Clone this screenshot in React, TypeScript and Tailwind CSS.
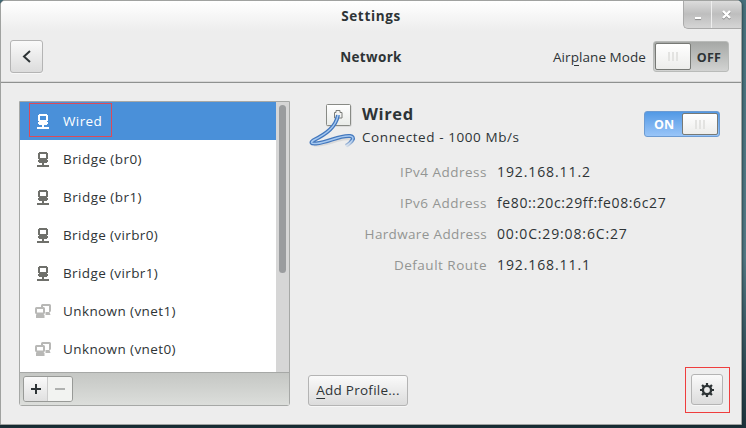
import React from "react";

type NetworkDevice = { name: string; kind: "wired" | "virtual"; tracking: string };

const devices: NetworkDevice[] = [
  { name: "Wired", kind: "wired", tracking: "tracking-[0.4px]" },
  { name: "Bridge (br0)", kind: "wired", tracking: "tracking-[0.43px]" },
  { name: "Bridge (br1)", kind: "wired", tracking: "tracking-[0.43px]" },
  { name: "Bridge (virbr0)", kind: "wired", tracking: "tracking-[0.38px]" },
  { name: "Bridge (virbr1)", kind: "wired", tracking: "tracking-[0.38px]" },
  { name: "Unknown (vnet1)", kind: "virtual", tracking: "tracking-[0.4px]" },
  { name: "Unknown (vnet0)", kind: "virtual", tracking: "tracking-[0.4px]" },
];

const details = [
  { label: "IPv4 Address", value: "192.168.11.2", labelTracking: "tracking-[0.5px]", tracking: "tracking-[0.9px]" },
  { label: "IPv6 Address", value: "fe80::20c:29ff:fe08:6c27", labelTracking: "tracking-[0.5px]", tracking: "tracking-[0.62px]" },
  { label: "Hardware Address", value: "00:0C:29:08:6C:27", labelTracking: "tracking-[0.35px]", tracking: "tracking-[0.86px]" },
  { label: "Default Route", value: "192.168.11.1", labelTracking: "tracking-[0.5px]", tracking: "tracking-[0.9px]" },
];

const raised =
  "border border-[#b4b4b4] bg-gradient-to-b from-[#fafafa] to-[#dcdcdc] shadow-[0_1px_0_#f7f7f7]";

function WiredIcon() {
  return (
    <svg width="12" height="15" viewBox="0 0 12 15" fill="currentColor" shapeRendering="crispEdges">
      <path fillRule="evenodd" d="M2 0h8v1h1v6h-1v1h1v2h-1v1H7v2h5v2H0v-2h5v-2H2v-1H1V8h1V7H1V1h1zM3 2v4h6V2z" />
    </svg>
  );
}

function VirtualIcon() {
  return (
    <svg width="16" height="14" viewBox="0 0 16 14" fill="currentColor">
      <path d="M6 3V1.500Q6 0 7.500 0H14.500Q16 0 16 1.500V6.500Q16 8 14.500 8L15.500 11H10.500V8H14V2H8V3z" />
      <path fillRule="evenodd" d="M1.500 3H8.500Q10 3 10 4.500V8.500Q10 10 8.500 10L9.500 11V14H1V11L1.500 10Q0 10 0 8.500V4.500Q0 3 1.500 3zM2 5V8.500H8V5z" />
    </svg>
  );
}

function CableIcon() {
  const cable = "M30 12C28 24 18 31 6 37C2 39.500 3 41 8 40.500C21 39.500 31 32 42 33C48 34 44 39 38 43";
  return (
    <svg width="48" height="46" viewBox="0 0 48 46" fill="none" className="mt-[2px]">
      <defs>
        <linearGradient id="plate" x1="0" y1="0" x2="0" y2="1">
          <stop stopColor="#fff" />
          <stop offset="1" stopColor="#e9ebe8" />
        </linearGradient>
        <linearGradient id="end" x1="0" y1="36" x2="0" y2="45" gradientUnits="userSpaceOnUse">
          <stop stopColor="#ededed" stopOpacity="0" />
          <stop offset="1" stopColor="#ededed" />
        </linearGradient>
      </defs>
      <rect x="18.500" y="2" width="25" height="21.500" rx="1.500" fill="#c9c9c9" />
      <rect x="18.500" y="1.500" width="24" height="21" rx="1" fill="url(#plate)" stroke="#888a85" />
      <path d="M26.500 15V9.500h1.500V7.500h4v2h2V15z" fill="#f4f4f2" stroke="#7b7d79" />
      <path d="M6 42C20 43 31 34 43 36" stroke="#bebebe" strokeWidth="3" opacity=".4" />
      <path d={cable} stroke="#4478bd" strokeWidth="4" strokeLinejoin="round" />
      <path d={cable} stroke="#a5c8f0" strokeWidth="1.500" />
      <path d="M34 37h14v9H34z" fill="url(#end)" />
    </svg>
  );
}

function GearIcon() {
  return (
    <svg width="14" height="14" viewBox="0 0 14 14" fill="none" stroke="#2e3436">
      <circle cx="7" cy="7" r="4.100" strokeWidth="2.400" />
      <path d="M7 0v3M7 11v3M0 7h3M11 7h3M2.050 2.050l2.100 2.100M9.850 9.850l2.100 2.100M11.950 2.050l-2.100 2.100M4.150 9.850l-2.100 2.100" strokeWidth="2.200" />
    </svg>
  );
}

function Grip() {
  return (
    <div className="flex gap-[2px]">
      {[0, 1, 2].map((i) => (
        <span key={i} className="h-[9px] w-[2px] bg-[#e3e3e1]" />
      ))}
    </div>
  );
}

function Knob() {
  return (
    <div className="flex w-9 items-center justify-center rounded-[2px] border border-[#777975] bg-gradient-to-b from-white to-[#ededeb]">
      <Grip />
    </div>
  );
}

function DeviceRow({ device, selected }: { device: NetworkDevice; selected: boolean }) {
  const iconColor = selected ? "text-white" : device.kind === "wired" ? "text-[#6f706b]" : "text-[#b8b8b6]";
  return (
    <div
      className={
        selected
          ? "flex h-[38px] shrink-0 items-center bg-[#4a90d9] pl-[9px] text-white"
          : "flex h-[38px] shrink-0 items-center pl-[9px]"
      }
    >
      <div
        className={
          selected
            ? "mb-[2px] flex h-[34px] w-[83px] items-center border border-[#dc4a58] pt-[2px]"
            : "flex h-[34px] items-center pl-px"
        }
      >
        <span className={"flex w-[27px] justify-center pr-px " + iconColor}>
          {device.kind === "wired" ? <WiredIcon /> : <VirtualIcon />}
        </span>
        <span className={"ml-[6px] whitespace-nowrap " + device.tracking}>{device.name}</span>
      </div>
    </div>
  );
}

export default function App() {
  return (
    <div className="h-[428px] w-[746px] overflow-hidden bg-gradient-to-b from-[#47707c] via-[#527884] via-60% to-[#1d323b] font-['Open_Sans',sans-serif] text-[13.5px] leading-5 text-[#2e3436]">
      <div className="flex h-[425px] w-[742px] flex-col overflow-hidden rounded-t-[5px] border border-[#a0a2a0] bg-[#ededed] shadow-[0_1px_3px_#10242a]">
        <header className="relative flex h-[30px] shrink-0 items-center justify-center bg-gradient-to-b from-white to-[#ededed] font-bold">
          <span className="tracking-[0.65px]">Settings</span>
          <div className="absolute -top-px right-0 flex h-[29px] rounded-bl-[5px] border-b border-l border-[#aaa] bg-gradient-to-b from-[#dedede] via-[#bebebe] to-[#d5d5d5]">
            <div className="flex w-[28px] justify-center border-r border-[#eee] pt-[17px]">
              <span className="h-[2px] w-[6px] bg-white shadow-[0_1px_1px_#888]" />
            </div>
            <div className="flex w-[29px] items-center justify-center pt-px">
              <svg width="9" height="9" viewBox="0 0 9 9" stroke="#fff" strokeWidth="2.400" className="drop-shadow-[0_1px_0_#888]">
                <path d="M1 1l7 7M8 1l-7 7" />
              </svg>
            </div>
          </div>
        </header>

        <div className="flex h-[52px] shrink-0 items-center border-b border-[#8f9190] pl-[9px] pr-[12px] shadow-[inset_0_-1px_0_#d8d8d8]">
          <button className={"flex h-[33px] w-[33px] items-center justify-center rounded-[3px] " + raised}>
            <svg width="9" height="13" viewBox="0 0 9 13" fill="none" stroke="#2e3436" strokeWidth="2">
              <path d="M8 1L2 6.500L8 12" />
            </svg>
          </button>
          <div className="w-[297px] text-right font-bold">
            <span className="mr-[-62px] inline-block w-[62px] text-center tracking-[0.35px]">Network</span>
          </div>
          <span className="ml-auto mr-[7px] whitespace-nowrap tracking-[0.07px]">
            Air<span className="underline underline-offset-[3px]">p</span>lane Mode
          </span>
          <div className="flex h-[31px] w-[76px] rounded-[3px] border border-[#b9bbb9] bg-gradient-to-b from-[#a6a8a6] to-[#d2d3d2] p-px">
            <Knob />
            <span className="flex flex-1 items-center justify-center pt-[2px] text-[12.5px] font-bold tracking-[0.2px]">OFF</span>
          </div>
        </div>

        <main className="flex min-h-0 flex-1 pl-[18px] pt-[18px]">
          <section className="flex h-[305px] w-[271px] flex-col rounded-b-[3px] border border-[#a6a8a6]">
            <div className="flex h-[270px] overflow-hidden bg-white">
              <div className="flex flex-1 flex-col">
                {devices.map((d, i) => (
                  <DeviceRow key={d.name} device={d} selected={i === 0} />
                ))}
              </div>
              <div className="w-[13px] bg-[#d6d6d6] px-[3px] pt-[3px]">
                <div className="h-[168px] w-[7px] rounded-full bg-[#9a9c9e]" />
              </div>
            </div>
            <div className="flex flex-1 items-start border-t border-[#a6a8a6] bg-gradient-to-b from-[#c5c7c4] to-[#dcdedb] pl-[3px] pt-[3px]">
              <div className="flex h-[26px] w-[50px] overflow-hidden rounded-[3px] border border-[#989a97]">
                <button className="flex w-6 items-center justify-center border-r border-[#ccc] bg-gradient-to-b from-[#fafafa] to-[#e0e0e0]">
                  <svg width="10" height="10" viewBox="0 0 10 10" fill="#2e3436"><path d="M4 0h2v4h4v2H6v4H4V6H0V4h4z" /></svg>
                </button>
                <button className="flex flex-1 items-center justify-center bg-[#f2f3f1]">
                  <span className="h-[2px] w-[10px] bg-[#b0b2b0]" />
                </button>
              </div>
            </div>
          </section>

          <section className="flex flex-1 flex-col pl-[18px] pr-[11px]">
            <div className="flex h-[50px]">
              <CableIcon />
              <div className="ml-[6px] flex flex-col">
                <h1 className="h-[24px] text-[16.5px] font-bold leading-[25px] tracking-[0.6px]">Wired</h1>
                <p className="whitespace-nowrap leading-[25px] tracking-[0.58px]">Connected - 1000 Mb/s</p>
              </div>
              <div className="ml-auto mr-[10px] mt-[10px] flex h-[26px] w-[76px] rounded-[3px] border border-[#6c9bd2] bg-gradient-to-b from-[#5299e5] to-[#99c5f8] p-px">
                <span className="flex flex-1 items-center justify-center pt-[2px] text-[12.5px] font-bold text-white">ON</span>
                <Knob />
              </div>
            </div>
            <dl className="mt-[6px] grid grid-cols-[179px_1fr] gap-x-[10px]">
              {details.map((d) => (
                <React.Fragment key={d.label}>
                  <dt className={"h-[31px] text-right leading-[30px] text-[#939593] " + d.labelTracking}>{d.label}</dt>
                  <dd className={"h-[31px] whitespace-nowrap text-sm leading-[30px] " + d.tracking}>{d.value}</dd>
                </React.Fragment>
              ))}
            </dl>
            <div className="mb-[11px] mt-auto flex h-[46px] items-center justify-between">
              <button className={"h-[31px] w-[100px] whitespace-nowrap rounded-[3px] tracking-[0.25px] " + raised}>
                <span className="underline underline-offset-[3px]">A</span>dd Profile...
              </button>
              <div className="flex h-[46px] w-[45px] items-center border border-[#ef3e3e] pb-px pl-[5px]">
                <button className={"flex h-[31px] w-8 items-center justify-center rounded-[3px] " + raised}>
                  <GearIcon />
                </button>
              </div>
            </div>
          </section>
        </main>
      </div>
    </div>
  );
}
